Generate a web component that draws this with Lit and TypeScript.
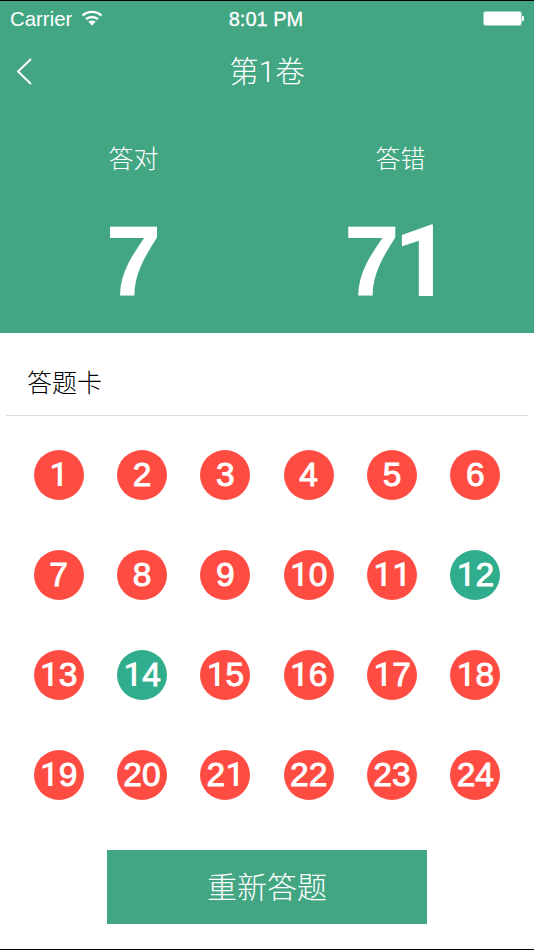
import { LitElement, html, css } from "lit";
import { customElement } from "lit/decorators.js";

const GREEN_CELLS = new Set([12, 14]);

/* Helvetica's "1" has no foot, Liberation's has: take that one glyph from Roboto. */
const digits = (value: number) =>
  String(value)
    .split("")
    .map((c) => (c === "1" ? html`<span class="one">1</span>` : html`<span>${c}</span>`));

@customElement("app-root")
export class AppRoot extends LitElement {
  static styles = css`
    :host {
      display: flex;
      flex-direction: column;
      width: 534px;
      height: 950px;
      background: #fff;
      font-family: "Liberation Sans", "Noto Sans CJK SC", sans-serif;
      overflow: hidden;
      border-top: 1px solid #000;
      border-bottom: 1px solid #000;
      box-sizing: border-box;
    }
    .head {
      background: #43a683;
      height: 332px;
      color: #fff;
      display: flex;
      flex-direction: column;
      flex: none;
    }
    .status {
      height: 36px;
      display: flex;
      align-items: center;
      position: relative;
      padding: 0 10px;
      font-size: 20.4px;
      color: #fff;
    }
    .carrier {
      display: flex;
      align-items: center;
      gap: 9px;
    }
    .carrier svg {
      margin-top: -3px;
    }
    .time {
      position: absolute;
      left: 0;
      right: 2px;
      text-align: center;
      font-size: 20px;
      -webkit-text-stroke: 0.3px #fff;
    }
    .battery {
      margin-left: auto;
      display: flex;
      align-items: center;
      margin-top: -1px;
    }
    .battery i {
      display: block;
      width: 37px;
      height: 13px;
      background: #fff;
      border-radius: 2px;
      box-shadow: 0 0 0 1px rgba(255, 255, 255, 0.5);
    }
    .battery b {
      display: block;
      width: 2px;
      height: 5px;
      background: #fff;
      border-radius: 0 1px 1px 0;
      margin-left: 1px;
    }
    .nav {
      height: 68px;
      display: flex;
      align-items: center;
      position: relative;
      font-family: "Roboto", "Noto Sans CJK SC", sans-serif;
      font-weight: 300;
    }
    .nav svg {
      position: absolute;
      left: 14px;
      top: 20px;
    }
    .title {
      width: 100%;
      text-align: center;
      font-size: 29.5px;
      line-height: 36px;
      margin-top: 2px;
    }
    .stats {
      display: grid;
      grid-template-columns: 267px 267px;
    }
    .stat {
      display: flex;
      flex-direction: column;
      align-items: center;
    }
    .label {
      font-family: "Noto Sans CJK SC", sans-serif;
      font-weight: 300;
      font-size: 25px;
      line-height: 36px;
      margin-top: 34px;
    }
    .num {
      font-weight: 700;
      font-size: 100px;
      line-height: 100px;
      margin-top: 36px;
    }
    .one {
      font-family: "Roboto", sans-serif;
    }
    .num span:has(+ .one) {
      letter-spacing: -6px;
    }
    .num .one {
      margin-right: 6px;
    }
    .card-title {
      height: 83px;
      margin: 0 6px;
      padding: 14px 21px 0;
      box-sizing: border-box;
      display: flex;
      align-items: center;
      font-family: "Noto Sans CJK SC", sans-serif;
      font-weight: 300;
      font-size: 25px;
      color: #000;
      border-bottom: 1px solid #dcdcdc;
      flex: none;
    }
    .grid {
      display: grid;
      grid-template-columns: repeat(6, 1fr);
      grid-auto-rows: 100px;
      padding: 9px 17px 0;
    }
    .cell {
      display: flex;
      align-items: center;
      justify-content: center;
    }
    .dot {
      width: 50px;
      height: 50px;
      border-radius: 50%;
      background: #ff4c43;
      color: #fff;
      display: flex;
      align-items: center;
      justify-content: center;
      font-size: 33.5px;
      line-height: 1;
      font-weight: 400;
      -webkit-text-stroke: 0.9px #fff;
    }
    .dot .one {
      font-weight: 500;
      -webkit-text-stroke: 0;
    }
    .dot.ok {
      background: #2fad8c;
    }
    .foot {
      display: flex;
      justify-content: center;
      padding-top: 25px;
    }
    button {
      width: 320px;
      height: 74px;
      border: 0;
      border-radius: 0;
      background: #43a683;
      color: #fff;
      font-family: "Noto Sans CJK SC", sans-serif;
      font-weight: 300;
      font-size: 30px;
      padding: 0 0 4px;
    }
  `;

  render() {
    const nums = Array.from({ length: 24 }, (_, i) => i + 1);
    return html`
      <div class="head">
        <div class="status">
          <span class="carrier">
            Carrier
            <svg width="22" height="16" viewBox="0 0 22 16" fill="none" stroke="#fff" stroke-width="2.4">
              <path d="M1.500 5.500C6.800.6 15.200.6 20.500 5.500" />
              <path d="M5 9.200c3.400-3 8.600-3 12 0" />
              <path d="M11 15.500 7.300 11.800c2.100-1.700 5.300-1.700 7.400 0Z" fill="#fff" stroke="none" />
            </svg>
          </span>
          <span class="time">8:01 PM</span>
          <span class="battery"><i></i><b></b></span>
        </div>
        <div class="nav">
          <svg width="22" height="30" viewBox="0 0 22 30" fill="none" stroke="#fff" stroke-width="2">
            <path d="M17 2 4 14.500 17 27" />
          </svg>
          <div class="title">第1卷</div>
        </div>
        <div class="stats">
          <div class="stat"><div class="label">答对</div><div class="num">${digits(7)}</div></div>
          <div class="stat"><div class="label">答错</div><div class="num">${digits(71)}</div></div>
        </div>
      </div>
      <div class="card-title">答题卡</div>
      <div class="grid">
        ${nums.map(
          (n) =>
            html`<div class="cell">
              <div class="dot ${GREEN_CELLS.has(n) ? "ok" : ""}"><div>${digits(n)}</div></div>
            </div>`
        )}
      </div>
      <div class="foot"><button>重新答题</button></div>
    `;
  }
}
